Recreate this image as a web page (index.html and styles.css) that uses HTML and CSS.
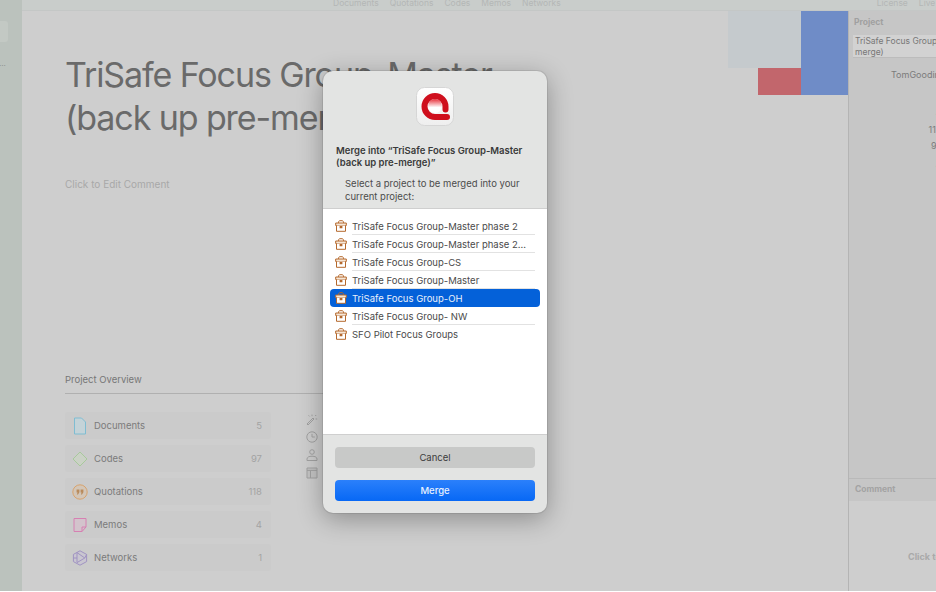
FILE: index.html
```html
<!DOCTYPE html>
<html lang="en">
<head>
    <meta charset="UTF-8">
    <meta name="viewport" content="width=device-width, initial-scale=1.0">
    <title>Merge Project</title>
    <link rel="stylesheet" href="styles.css">
</head>
<body>
    <div class="app">
        <div class="sidebar">
            <div class="sidebar-item"></div>
            <div class="sidebar-dots">...</div>
        </div>
        <div class="content">
            <div class="toolbar">
                <span>Documents</span>
                <span>Quotations</span>
                <span>Codes</span>
                <span>Memos</span>
                <span>Networks</span>
                <span class="toolbar-right">License</span>
                <span>Live Help</span>
            </div>
            <div class="workspace">
                <div class="main">
                    <div class="head">
                        <div class="head-text">
                            <h1>TriSafe Focus Group-Master<br>(back up pre-merge)</h1>
                            <p class="edit-comment">Click to Edit Comment</p>
                        </div>
                        <div class="treemap">
                            <div class="tile-light"></div>
                            <div class="tile-red"></div>
                            <div class="tile-blue"></div>
                        </div>
                    </div>
                    <div class="overview">
                        <div class="overview-title">Project Overview</div>
                        <div class="overview-body">
                            <div class="overview-list">
                                <div class="overview-row">
                                    <svg class="row-icon" viewBox="0 0 18 18"><path d="M3.500 1h7l4 4v12h-11z" fill="#c4d3d8" stroke="#7fbdd2"/></svg>
                                    <span class="row-label">Documents</span><span class="row-count">5</span>
                                </div>
                                <div class="overview-row">
                                    <svg class="row-icon" viewBox="0 0 18 18"><path d="M9 2l7 7-7 7-7-7z" fill="#cbd2c6" stroke="#a8c99c"/></svg>
                                    <span class="row-label">Codes</span><span class="row-count">97</span>
                                </div>
                                <div class="overview-row">
                                    <svg class="row-icon" viewBox="0 0 18 18"><circle cx="9" cy="9" r="7.200" fill="#d3c6b8" stroke="#d8a36d"/><path d="M5.600 6.600h2.800v2.600L7 11.600H5.900l.7-2.200h-1zM9.600 6.600h2.800v2.600L11 11.600H9.900l.7-2.200h-1z" fill="#b98b5c"/></svg>
                                    <span class="row-label">Quotations</span><span class="row-count">118</span>
                                </div>
                                <div class="overview-row">
                                    <svg class="row-icon" viewBox="0 0 18 18"><path d="M3 2.500h12v8.500l-4 4.500H3z" fill="#d3c3cc" stroke="#d680b2"/><path d="M15 11h-4v4.500" fill="none" stroke="#d680b2"/></svg>
                                    <span class="row-label">Memos</span><span class="row-count">4</span>
                                </div>
                                <div class="overview-row">
                                    <svg class="row-icon" viewBox="0 0 18 18"><path d="M9 1.800l6.600 3.600v7.200L9 16.200l-6.600-3.600V5.400z" fill="#c9c6d0" stroke="#a093c2"/><path d="M6 3.600l7.800 5.400L6 13.600zM2.400 9H6M13.800 9l1.800-3.600" fill="none" stroke="#a093c2"/></svg>
                                    <span class="row-label">Networks</span><span class="row-count">1</span>
                                </div>
                            </div>
                            <div class="meta-icons">
                                <svg class="meta-icon" viewBox="0 0 12 12"><path d="M1 11l6-6 1 1-6 6zM6 3.200V1.600M9.200 3l1-1M9.600 6h1.600M3.600 3.400l-1-1" fill="none" stroke="#a2a2a2"/></svg>
                                <svg class="meta-icon" viewBox="0 0 12 12"><circle cx="6" cy="6" r="5.200" fill="none" stroke="#a2a2a2"/><path d="M6 2.800V6h2.800" fill="none" stroke="#a2a2a2"/></svg>
                                <svg class="meta-icon" viewBox="0 0 12 12"><circle cx="6" cy="3" r="2.300" fill="none" stroke="#a2a2a2"/><path d="M1 11.500V10c0-1.800 2-2.800 5-2.800s5 1 5 2.800v1.500z" fill="none" stroke="#a2a2a2"/></svg>
                                <svg class="meta-icon" viewBox="0 0 12 12"><path d="M1 1h10v10H1zM1 3.400h10M4.500 3.400V11" fill="#c4c4c4" stroke="#a2a2a2"/></svg>
                            </div>
                        </div>
                    </div>
                </div>
                <div class="inspector">
                    <div class="inspector-top">
                        <h2 class="inspector-title">Project</h2>
                        <div class="name-field">TriSafe Focus Group-Master<br>merge)</div>
                        <div class="stats">
                            <div class="stat-owner">TomGooding</div>
                            <div class="stat-group">
                                <div>5</div>
                                <div>4</div>
                                <div>118</div>
                                <div>97</div>
                            </div>
                            <div class="stat-group">
                                <div>4</div>
                                <div>1</div>
                                <div>2</div>
                            </div>
                            <div class="stat-group">
                                <div>3</div>
                                <div>7</div>
                            </div>
                        </div>
                    </div>
                    <div class="comment">
                        <h2 class="comment-title">Comment</h2>
                        <div class="comment-body">Click to Edit</div>
                    </div>
                </div>
            </div>
        </div>
    </div>

    <div class="dialog">
        <div class="dialog-head">
            <svg class="app-icon" viewBox="0 0 38 39">
                <defs>
                    <linearGradient id="tile" x1="0" y1="0" x2="0" y2="1">
                        <stop offset="0" stop-color="#ffffff"/>
                        <stop offset="1" stop-color="#eeeeee"/>
                    </linearGradient>
                    <linearGradient id="hole" x1="0" y1="0" x2="0" y2="1">
                        <stop offset="0" stop-color="#e8303a"/>
                        <stop offset="0.6" stop-color="#ffffff"/>
                    </linearGradient>
                </defs>
                <rect x="0.500" y="0.500" width="37" height="38" rx="8" fill="url(#tile)" stroke="#d6d6d6"/>
                <circle cx="19" cy="19" r="7" fill="url(#hole)"/>
                <path d="M29.500 22.500V19.500A10.500 10.500 0 1 0 19 30H31" fill="none" stroke="#cf0f1d" stroke-width="6" stroke-linecap="round"/>
            </svg>
            <h3 class="dialog-title">Merge into “TriSafe Focus Group-Master (back up pre-merge)”</h3>
            <p class="dialog-text">Select a project to be merged into your current project:</p>
        </div>
        <div class="project-list">
            <div class="project-row"><svg class="project-icon" viewBox="0 0 12 12"><use href="#box"/></svg><span class="project-name">TriSafe Focus Group-Master phase 2</span></div>
            <div class="project-row"><svg class="project-icon" viewBox="0 0 12 12"><use href="#box"/></svg><span class="project-name">TriSafe Focus Group-Master phase 2...</span></div>
            <div class="project-row"><svg class="project-icon" viewBox="0 0 12 12"><use href="#box"/></svg><span class="project-name">TriSafe Focus Group-CS</span></div>
            <div class="project-row"><svg class="project-icon" viewBox="0 0 12 12"><use href="#box"/></svg><span class="project-name">TriSafe Focus Group-Master</span></div>
            <div class="project-row selected"><svg class="project-icon" viewBox="0 0 12 12"><use href="#box"/></svg><span class="project-name">TriSafe Focus Group-OH</span></div>
            <div class="project-row"><svg class="project-icon" viewBox="0 0 12 12"><use href="#box"/></svg><span class="project-name">TriSafe Focus Group- NW</span></div>
            <div class="project-row last"><svg class="project-icon" viewBox="0 0 12 12"><use href="#box"/></svg><span class="project-name">SFO Pilot Focus Groups</span></div>
        </div>
        <div class="dialog-buttons">
            <button class="btn btn-cancel">Cancel</button>
            <button class="btn btn-merge">Merge</button>
        </div>
    </div>

    <svg class="sprites" width="0" height="0">
        <symbol id="box" viewBox="0 0 12 12">
            <path d="M3.500 3V2.200C3.500 1.300 4.200.7 5 .7h2c.8 0 1.500.6 1.500 1.500V3" fill="none" stroke="#b4682c"/>
            <path d="M.7 3h10.600v2.500H.7z" fill="#f6e7d6" stroke="#b4682c"/>
            <path d="M1.500 5.500v5.800h9V5.500" fill="#ffffff" stroke="#b4682c"/>
            <path d="M4.600 6h2.800v2.200H4.600z" fill="#b4682c"/>
        </symbol>
    </svg>
</body>
</html>
```

FILE: styles.css
```css
* {
    box-sizing: border-box;
}
html, body {
    margin: 0;
    height: 592px;
    overflow: hidden;
    background: white;
}
body {
    font-family: Inter, "Liberation Sans", sans-serif;
    color: #333;
    position: relative;
}
h1, h2, h3, p {
    margin: 0;
}
.sprites {
    position: absolute;
}

/* window behind the dialog */
.app {
    display: flex;
    height: 591px;
    overflow: hidden;
    background: #cecece;
}
.sidebar {
    width: 22px;
    flex: none;
    background: #bbc2bd;
    padding-top: 21px;
}
.sidebar-item {
    width: 8px;
    height: 21px;
    background: #c3c9c4;
    border-radius: 0 3px 3px 0;
}
.sidebar-dots {
    margin-top: 16px;
    font-size: 8px;
    line-height: 10px;
    color: #8c908d;
    margin-left: -1px;
}
.content {
    flex: 1;
    min-width: 0;
    display: flex;
    flex-direction: column;
}
.toolbar {
    height: 11px;
    flex: none;
    display: flex;
    gap: 11px;
    padding-left: 311px;
    font-size: 8.500px;
    line-height: 7px;
    color: #b4b7b6;
    background: #c9cdcb;
    border-bottom: 1px solid #c4c7c6;
    white-space: nowrap;
    overflow: hidden;
}
.toolbar-right {
    margin-left: 305px;
}
.workspace {
    flex: 1;
    display: flex;
    min-height: 0;
}
.main {
    flex: 1;
    min-width: 0;
    padding-left: 43px;
}
.head {
    display: flex;
    justify-content: space-between;
    align-items: flex-start;
}
.head-text {
    padding-top: 42px;
}
h1 {
    font-size: 34px;
    line-height: 43px;
    font-weight: 400;
    letter-spacing: -1.100px;
    color: #6a6a6a;
    white-space: nowrap;
}
.edit-comment {
    margin-top: 38px;
    font-size: 10px;
    line-height: 14px;
    color: #a8a8a8;
}
.treemap {
    display: grid;
    grid-template-columns: 30px 43px 47px;
    grid-template-rows: 57px 27px;
}
.tile-light {
    grid-column: 1 / 3;
    grid-row: 1;
    background: #c5cacd;
}
.tile-red {
    grid-column: 2;
    grid-row: 2;
    background: #c2666c;
}
.tile-blue {
    grid-column: 3;
    grid-row: 1 / 3;
    background: #6f8cc7;
}
.overview {
    margin-top: 182px;
    width: 290px;
}
.overview-title {
    font-size: 9.500px;
    line-height: 14px;
    color: #777;
    padding-bottom: 6px;
    border-bottom: 1px solid #b0b0b0;
}
.overview-body {
    display: flex;
    padding-top: 18px;
}
.overview-list {
    width: 206px;
    display: flex;
    flex-direction: column;
    gap: 6px;
}
.overview-row {
    height: 27px;
    display: flex;
    align-items: center;
    padding: 0 9px 0 6px;
    background: #cbcbcb;
    border-radius: 3px;
    font-size: 9.500px;
    color: #7b7b7b;
}
.row-icon {
    width: 18px;
    height: 18px;
    margin-right: 5px;
    flex: none;
}
.row-label {
    flex: 1;
}
.row-count {
    color: #a3a3a3;
}
.meta-icons {
    margin-left: 35px;
    padding-top: 1px;
    display: flex;
    flex-direction: column;
    gap: 6px;
}
.meta-icon {
    width: 12px;
    height: 12px;
}

/* right panel */
.inspector {
    width: 88px;
    flex: none;
    display: flex;
    flex-direction: column;
    background: #c6c6c6;
    border-left: 1px solid #b4b4b4;
    overflow: hidden;
}
.inspector-top {
    flex: 1;
    padding: 5px 0 0 4px;
}
.inspector-title {
    font-size: 8.500px;
    line-height: 12px;
    font-weight: 700;
    color: #a0a0a0;
    padding-left: 1px;
}
.name-field {
    margin-top: 7px;
    width: 100px;
    height: 23px;
    padding: 1px 2px;
    background: #d2d2d2;
    border-bottom: 1px solid #bcbcbc;
    font-size: 8.500px;
    line-height: 10.500px;
    color: #777;
    white-space: nowrap;
}
.stats {
    width: 88.500px;
    font-size: 9px;
    line-height: 16.200px;
    color: #7b7b7b;
    text-align: right;
}
.stat-owner {
    margin-top: 9px;
    margin-right: -1px;
    padding-left: 38px;
    text-align: left;
    white-space: nowrap;
}
.stat-group {
    margin-top: 3px;
}
.stat-owner + .stat-group {
    margin-top: 6px;
}
.stat-group:last-child {
    margin-top: 16px;
}
.comment {
    height: 113px;
    flex: none;
    display: flex;
    flex-direction: column;
    border-top: 1px solid #b9b9b9;
}
.comment-title {
    height: 22px;
    padding-left: 6px;
    font-size: 8.500px;
    line-height: 20px;
    font-weight: 700;
    color: #a3a3a3;
}
.comment-body {
    flex: 1;
    padding: 50px 0 0 59px;
    background: #cecece;
    font-size: 9px;
    font-weight: 700;
    color: #a9a9a9;
    white-space: nowrap;
}

/* merge dialog */
.dialog {
    position: absolute;
    left: 323px;
    top: 71px;
    width: 224px;
    height: 442px;
    display: flex;
    flex-direction: column;
    background: #e3e4e3;
    border-radius: 10px;
    overflow: hidden;
    box-shadow: 0 0 0 1px rgba(0,0,0,0.08), 0 6px 26px rgba(0,0,0,0.32);
}
.dialog-head {
    height: 137px;
    flex: none;
    padding: 16px 13px 0;
}
.app-icon {
    display: block;
    width: 38px;
    height: 39px;
    margin: 0 auto 19px;
}
.dialog-title {
    font-size: 9.500px;
    line-height: 12px;
    font-weight: 600;
    color: #3a3a3a;
}
.dialog-text {
    margin-top: 8px;
    padding: 0 9px;
    font-size: 9.500px;
    line-height: 13px;
    color: #4c4c4c;
}
.project-list {
    height: 227px;
    flex: none;
    padding: 8px 7px 0;
    background: white;
    border-top: 1px solid #cfcfcf;
    border-bottom: 1px solid #cfcfcf;
}
.project-row {
    height: 18px;
    display: flex;
    align-items: center;
    padding-left: 5px;
    font-size: 9.500px;
    color: #4a4a4a;
    position: relative;
}
.project-row::after {
    content: "";
    position: absolute;
    left: 22px;
    right: 5px;
    bottom: 0;
    border-bottom: 1px solid #e2e2e2;
}
.project-row.last::after,
.project-row.selected::after {
    display: none;
}
.project-row.selected {
    background: #0461d9;
    border-radius: 4px;
    color: #e9f0fb;
}
.project-icon {
    width: 12px;
    height: 12px;
    margin-right: 5px;
    flex: none;
}
.project-name {
    white-space: nowrap;
}
.dialog-buttons {
    flex: 1;
    display: flex;
    flex-direction: column;
    gap: 12px;
    padding: 12px 12px 0;
}
.btn {
    height: 21px;
    border: none;
    border-radius: 4px;
    padding: 0;
    font-family: inherit;
    font-size: 9.500px;
}
.btn-cancel {
    background: #c8c9c8;
    color: #3c3c3c;
}
.btn-merge {
    background: linear-gradient(#2b80fb, #0768f5);
    color: #e8f1fe;
    font-weight: 500;
}
```
